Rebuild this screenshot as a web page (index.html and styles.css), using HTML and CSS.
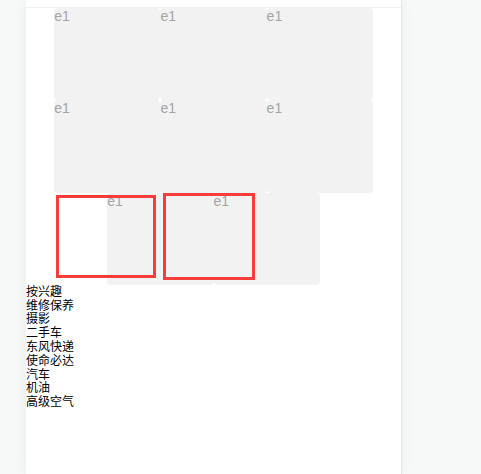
FILE: index.html
```html
<!DOCTYPE html>
<html>
<head>
<meta charset="utf-8">
<link rel="stylesheet" href="styles.css">
</head>
<body>
<div class="phone">
  <div class="header"></div>
  <div class="grid">
    <div class="cell">e1</div>
    <div class="cell">e1</div>
    <div class="cell">e1</div>
    <div class="cell">e1</div>
    <div class="cell">e1</div>
    <div class="cell">e1</div>
    <div class="cell">e1</div>
    <div class="cell">e1</div>
  </div>
  <ul class="list">
    <li>按兴趣</li>
    <li>维修保养</li>
    <li>摄影</li>
    <li>二手车</li>
    <li>东风快递</li>
    <li>使命必达</li>
    <li>汽车</li>
    <li>机油</li>
    <li>高级空气</li>
  </ul>
  <div class="sel sel-a"></div>
  <div class="sel sel-b"></div>
</div>
</body>
</html>
```

FILE: styles.css
```css
html, body {
  margin: 0;
  padding: 0;
  height: 100%;
}
body {
  background: #f7f8f8;
  overflow: hidden;
}
.phone {
  position: relative;
  margin-left: 26px;
  width: 375px;
  height: 100vh;
  background: #fff;
  box-shadow: 1px 0 0 #e4e5e5, 0 0 14px rgba(0, 0, 0, 0.06);
}
.header {
  height: 7px;
  border-bottom: 1px solid #f0f0f0;
}
.grid {
  width: 318.75px;
  margin: 0 auto;
  display: flex;
  flex-wrap: wrap;
  justify-content: center;
}
.cell {
  box-sizing: border-box;
  width: 33.3333%;
  height: 92.3px;
  background: #f2f2f2;
  border-radius: 4px;
  font-family: "Liberation Sans", Arial, sans-serif;
  font-size: 14px;
  line-height: 16px;
  color: #a4a4a4;
}
.list {
  list-style: none;
  margin: -1px 0 0;
  padding: 0;
  font-family: "Noto Sans CJK SC", sans-serif;
  font-size: 12px;
  line-height: 13.8px;
  color: #000;
}
.sel {
  position: absolute;
  box-sizing: border-box;
  border: 3px solid #f83c3c;
}
.sel-a {
  left: 30px;
  top: 195px;
  width: 100px;
  height: 83px;
}
.sel-b {
  left: 137px;
  top: 193px;
  width: 92px;
  height: 87px;
}
```
